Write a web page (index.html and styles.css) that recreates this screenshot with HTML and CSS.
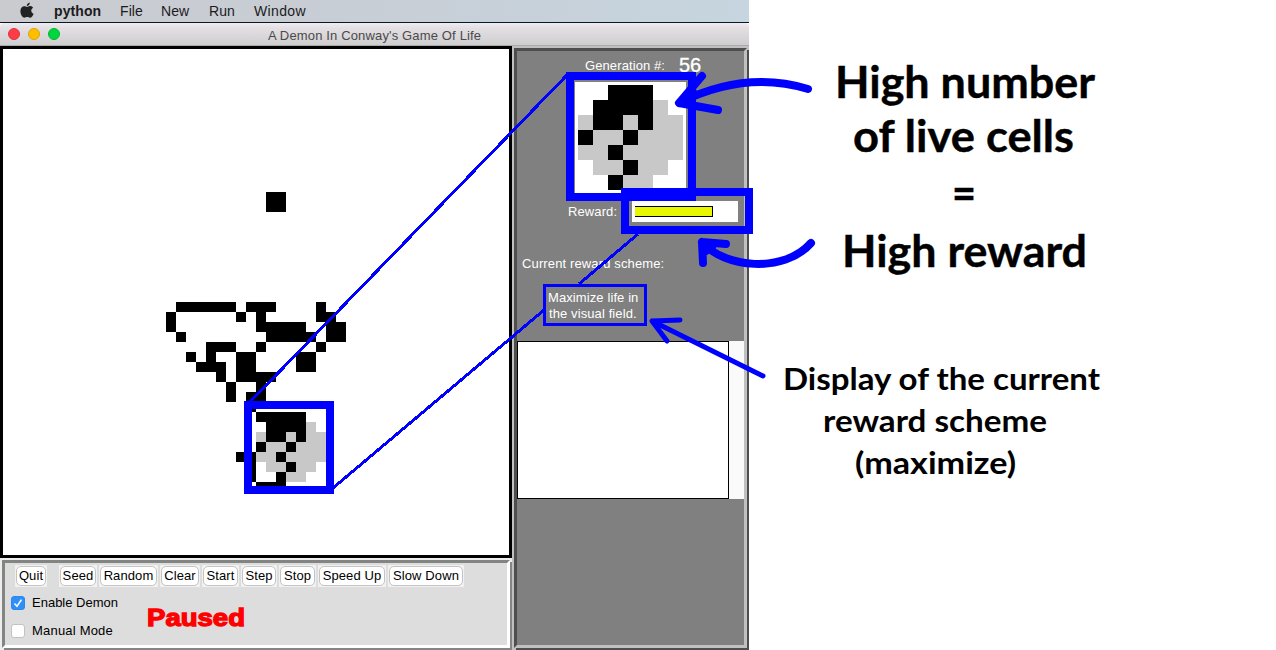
FILE: index.html
```html
<!DOCTYPE html>
<html lang="en">
<head>
<meta charset="utf-8">
<title>A Demon In Conway's Game Of Life</title>
<link rel="stylesheet" href="styles.css">
</head>
<body>
<div class="desktop">
  <nav class="menubar">
    <svg class="apple" width="14" height="17" viewBox="0 0 14 17"><path d="M9.8 0.5C9.9 2.5 8.4 4.1 6.8 4.1C6.6 2.4 8.1 0.8 9.8 0.5ZM7 4.9C7.7 4.9 8.6 4.1 10 4.1C11.4 4.1 12.5 4.8 13.1 5.7C10.4 7.3 10.8 10.6 13.6 11.7C12.9 13.6 11.6 15.8 10 15.8C8.9 15.8 8.5 15.1 7.2 15.1C5.9 15.1 5.4 15.8 4.4 15.8C2.6 15.8 0.4 12.5 0.4 9.3C0.4 6.1 2.3 4.3 4.3 4.3C5.5 4.3 6.4 4.9 7 4.9Z"/></svg>
    <span class="menu app">python</span>
    <span class="menu file">File</span>
    <span class="menu new">New</span>
    <span class="menu run">Run</span>
    <span class="menu win">Window</span>
  </nav>
  <header class="titlebar">
    <div class="lights"><i class="light red"></i><i class="light amber"></i><i class="light green"></i></div>
    <h1 class="title">A Demon In Conway's Game Of Life</h1>
  </header>
  <main class="content">
    <section class="left">
      <div class="board">
        <svg width="506" height="506" viewBox="3 49 506 506" shape-rendering="crispEdges">
          <path d="M266 192h20v20h-20zM176 302h60v10h-60zM246 302h30v10h-30zM316 302h10v10h-10zM166 312h10v20h-10zM236 312h10v10h-10zM256 312h10v20h-10zM316 312h20v10h-20zM266 322h40v20h-40zM306 332h10v10h-10zM326 322h20v20h-20zM176 332h10v10h-10zM206 342h30v10h-30zM256 342h10v10h-10zM316 342h10v10h-10zM186 352h10v10h-10zM206 352h10v10h-10zM236 352h20v30h-20zM296 352h20v20h-20zM196 362h30v10h-30zM216 372h10v10h-10zM256 372h20v10h-20zM226 382h10v20h-10zM256 382h10v20h-10zM246 392h10v20h-10z"/>
          <path class="field" d="M306 422h10v10h-10zM256 432h70v30h-70zM266 462h50v10h-50zM286 472h20v10h-20z"/>
          <path d="M256 412h50v10h-50zM266 422h40v10h-40zM266 432h20v10h-20zM296 432h10v10h-10zM256 442h10v10h-10zM286 442h10v10h-10zM236 452h20v10h-20zM276 452h10v10h-10zM246 462h10v20h-10zM286 462h10v10h-10zM276 472h10v10h-10zM256 482h30v10h-30z"/>
        </svg>
      </div>
      <div class="controls">
        <div class="buttons">
          <span class="cell quit"><button>Quit</button></span>
          <span class="cell seed"><button>Seed</button></span>
          <span class="cell random"><button>Random</button></span>
          <span class="cell clear"><button>Clear</button></span>
          <span class="cell start"><button>Start</button></span>
          <span class="cell step"><button>Step</button></span>
          <span class="cell stop"><button>Stop</button></span>
          <span class="cell speed"><button>Speed Up</button></span>
          <span class="cell slow"><button>Slow Down</button></span>
        </div>
        <div class="options">
          <div class="checks">
            <label class="check"><span class="box on"><svg width="12" height="12" viewBox="0 0 12 12"><path d="M2.5 6.5L5 9.2L9.5 2.6"/></svg></span><span class="name">Enable Demon</span></label>
            <label class="check"><span class="box"></span><span class="name wide">Manual Mode</span></label>
          </div>
          <svg class="status" width="110" height="34"><text x="5" y="24" textLength="98" lengthAdjust="spacingAndGlyphs">Paused</text></svg>
        </div>
      </div>
    </section>
    <aside class="side">
      <div class="generation"><span>Generation #:</span><b>56</b></div>
      <div class="eye">
        <svg width="111" height="111" viewBox="575 82 111 111" shape-rendering="crispEdges">
          <path class="field" d="M653 100h15v15h-15zM578 115h105v45h-105zM593 160h75v15h-75zM623 175h30v13h-30z"/>
          <path d="M608 85h45v15h-45zM593 100h60v15h-60zM593 115h30v15h-30zM638 115h15v15h-15zM578 130h15v15h-15zM623 130h15v15h-15zM608 145h15v15h-15zM623 160h15v15h-15zM608 175h15v15h-15z"/>
        </svg>
      </div>
      <div class="reward"><span>Reward:</span><div class="meter"><div class="fill"></div></div></div>
      <div class="scheme-label">Current reward scheme:</div>
      <div class="scheme"><span class="l1">Maximize life in</span><br><span class="l2">the visual field.</span></div>
      <div class="log"><div class="page"></div></div>
    </aside>
  </main>
</div>
<svg class="notes" width="1276" height="650" viewBox="0 0 1276 650">
  <g class="frame" shape-rendering="crispEdges">
    <rect x="248" y="405" width="82" height="85"/>
    <rect x="570" y="76" width="122" height="121"/>
    <rect x="625" y="192" width="124" height="38"/>
    <rect class="thin" x="544.5" y="285.5" width="101" height="39"/>
  </g>
  <g class="lead" shape-rendering="crispEdges">
    <path d="M249 403L567 75M333 488L544 310M579 284L638 234"/>
  </g>
  <g class="arrow">
    <path d="M808 89C765 76 721 82 679 103M702 76L679 103L718 110M693 92L684 103"/>
    <path d="M811 243C784 274 724 268 702 242M726 244L702 242L703 263M705 244L706 251L712 247"/>
    <path class="mid" d="M763 376L652 321M680 320L652 321L667 341"/>
  </g>
  <g class="big">
    <text x="835" y="98" textLength="260" lengthAdjust="spacingAndGlyphs">High number</text>
    <text x="853" y="152" textLength="221" lengthAdjust="spacingAndGlyphs">of live cells</text>
    <text x="952" y="209" textLength="24" lengthAdjust="spacingAndGlyphs">=</text>
    <text x="842" y="267" textLength="245" lengthAdjust="spacingAndGlyphs">High reward</text>
  </g>
  <g class="small">
    <text x="783" y="390" textLength="317" lengthAdjust="spacingAndGlyphs">Display of the current</text>
    <text x="823" y="432" textLength="224" lengthAdjust="spacingAndGlyphs">reward scheme</text>
    <text x="855" y="474" textLength="161" lengthAdjust="spacingAndGlyphs">(maximize)</text>
  </g>
</svg>
</body>
</html>
```
FILE: styles.css
```css
* { box-sizing: border-box; }
body { margin: 0; width: 1276px; height: 650px; overflow: hidden; background: #fff; font-family: "Liberation Sans", Arial, sans-serif; font-size: 13px; }
.desktop { width: 749px; height: 650px; }
.menubar { display: flex; align-items: center; height: 23px; padding-left: 20px; border-bottom: 1px solid #0a1726; background: linear-gradient(90deg, #c9cbcf, #c8ced6 50%, #c6d5df); color: #1b1b1d; font-size: 14px; }
.apple { fill: #222; margin: 0 20px 2px 0; }
.menu { flex: none; line-height: 22px; }
.app { width: 66px; font-weight: bold; letter-spacing: 0.1px; }
.file { width: 41px; letter-spacing: 0.1px; }
.new { width: 48px; letter-spacing: 0.1px; }
.run { width: 45px; letter-spacing: 0.1px; }
.win { letter-spacing: 0.35px; }
.titlebar { display: flex; align-items: center; height: 23px; border-bottom: 1px solid #aaa; border-radius: 4px 4px 0 0; background: linear-gradient(#f0edf0, #e4e0e4 20%, #cfcecf); }
.lights { display: flex; gap: 8px; padding-left: 8px; width: 268px; }
.light { width: 12px; height: 12px; border-radius: 50%; }
.red { background: #fc3d48; border: 1px solid #e0333c; }
.amber { background: #ffbe00; border: 1px solid #e2a400; }
.green { background: #00d63d; border: 1px solid #00b92f; }
.title { margin: 2px 0 0; font-size: 13px; font-weight: normal; color: #4b494b; letter-spacing: 0.15px; }
.content { display: flex; height: 604px; background: silver; }
.left { width: 512px; display: flex; flex-direction: column; gap: 2px; background: #ededed; }
.board { flex: none; height: 512px; border: 3px solid #000; background: #fff; }
.board svg, .eye svg { display: block; }
.field { fill: #c8c8c8; }
.controls { flex: none; height: 88px; margin: 0 2px 0 2px; border: 3px solid; border-color: #838583 #fff #fff #838583; background: #ddd; box-shadow: 2px 2px 0 #858585; }
.buttons { display: flex; padding: 2px 0 0 10px; height: 24px; }
.cell { flex: none; height: 22px; padding: 1px; background: #f1f1f1; margin-right: 2px; }
.cell button { display: block; width: 100%; height: 20px; padding: 0 0 1px; border: 1px solid #c4c4c4; border-radius: 5px; background: #fff; color: #000; font: 13px/17px "Liberation Sans", Arial, sans-serif; white-space: nowrap; letter-spacing: 0.1px; }
.quit { width: 32px; margin-right: 12px; }
.seed { width: 38px; }
.random { width: 59px; }
.clear { width: 40px; }
.start { width: 37px; }
.step { width: 36px; }
.stop { width: 37px; }
.speed { width: 68px; }
.slow { width: 76px; margin-right: 0; }
.options { display: flex; }
.checks { width: 137px; padding: 8px 0 0 6px; }
.check { display: flex; align-items: center; gap: 7px; height: 16px; margin-bottom: 12px; white-space: nowrap; }
.check:last-child { margin-bottom: 0; }
.name { margin-bottom: 2px; }
.wide { letter-spacing: 0.2px; }
.box { width: 14px; height: 14px; border: 1px solid #c2c2c2; border-radius: 3px; background: #fff; }
.box.on { border-color: #2b86ee; background: #2e8ff8; }
.box svg { display: block; fill: none; stroke: #fff; stroke-width: 1.6; }
.status { margin-top: 15px; fill: #f00; stroke: #f00; stroke-width: 1.3; font: bold 24px "Liberation Sans", Arial, sans-serif; }
.side { width: 233px; height: 600px; margin: 2px 0 0 2px; border: 3px solid; border-color: #4e4e4e silver silver #4e4e4e; box-shadow: 2px 2px 0 #4e4e4e; background: #808080; color: #fff; }
.generation { display: flex; align-items: center; height: 31px; padding: 0 0 2px 68px; white-space: nowrap; }
.generation span { width: 94px; letter-spacing: 0.1px; }
.generation b { font-size: 20px; font-weight: normal; -webkit-text-stroke: 0.35px #fff; }
.eye { width: 111px; height: 111px; margin-left: 58px; background: #fff; }
.reward { display: flex; align-items: center; height: 21px; margin-top: 8px; padding-left: 51px; }
.reward span { width: 64px; letter-spacing: 0.1px; }
.meter { width: 106px; height: 21px; padding: 5px 0 0 3px; background: #fff; }
.fill { width: 78px; height: 11px; border: 1px solid #000; border-left: 0; background: #e8f600; }
.scheme-label { margin-top: 34px; padding-left: 5px; height: 16px; line-height: 16px; letter-spacing: 0.13px; }
.scheme { height: 69px; padding: 18px 0 0 31px; line-height: 16px; letter-spacing: 0.1px; }
.l2 { padding-left: 1px; }
.log { height: 158px; background: #fafafa; }
.page { width: 212px; height: 158px; border: 1px solid #000; background: #fff; }
.notes { position: absolute; left: 0; top: 0; }
.frame rect { fill: none; stroke: #00f; stroke-width: 8; }
.frame .thin { stroke-width: 3; }
.lead { fill: none; stroke: #00f; stroke-width: 3; }
.arrow { fill: none; stroke: #00f; stroke-width: 8; stroke-linecap: round; stroke-linejoin: round; }
.arrow .mid { stroke-width: 5; }
.big { font: bold 43px Lato, "Open Sans", sans-serif; stroke: #000; stroke-width: 0.4; }
.small { font: bold 31px Lato, "Open Sans", sans-serif; }
```
